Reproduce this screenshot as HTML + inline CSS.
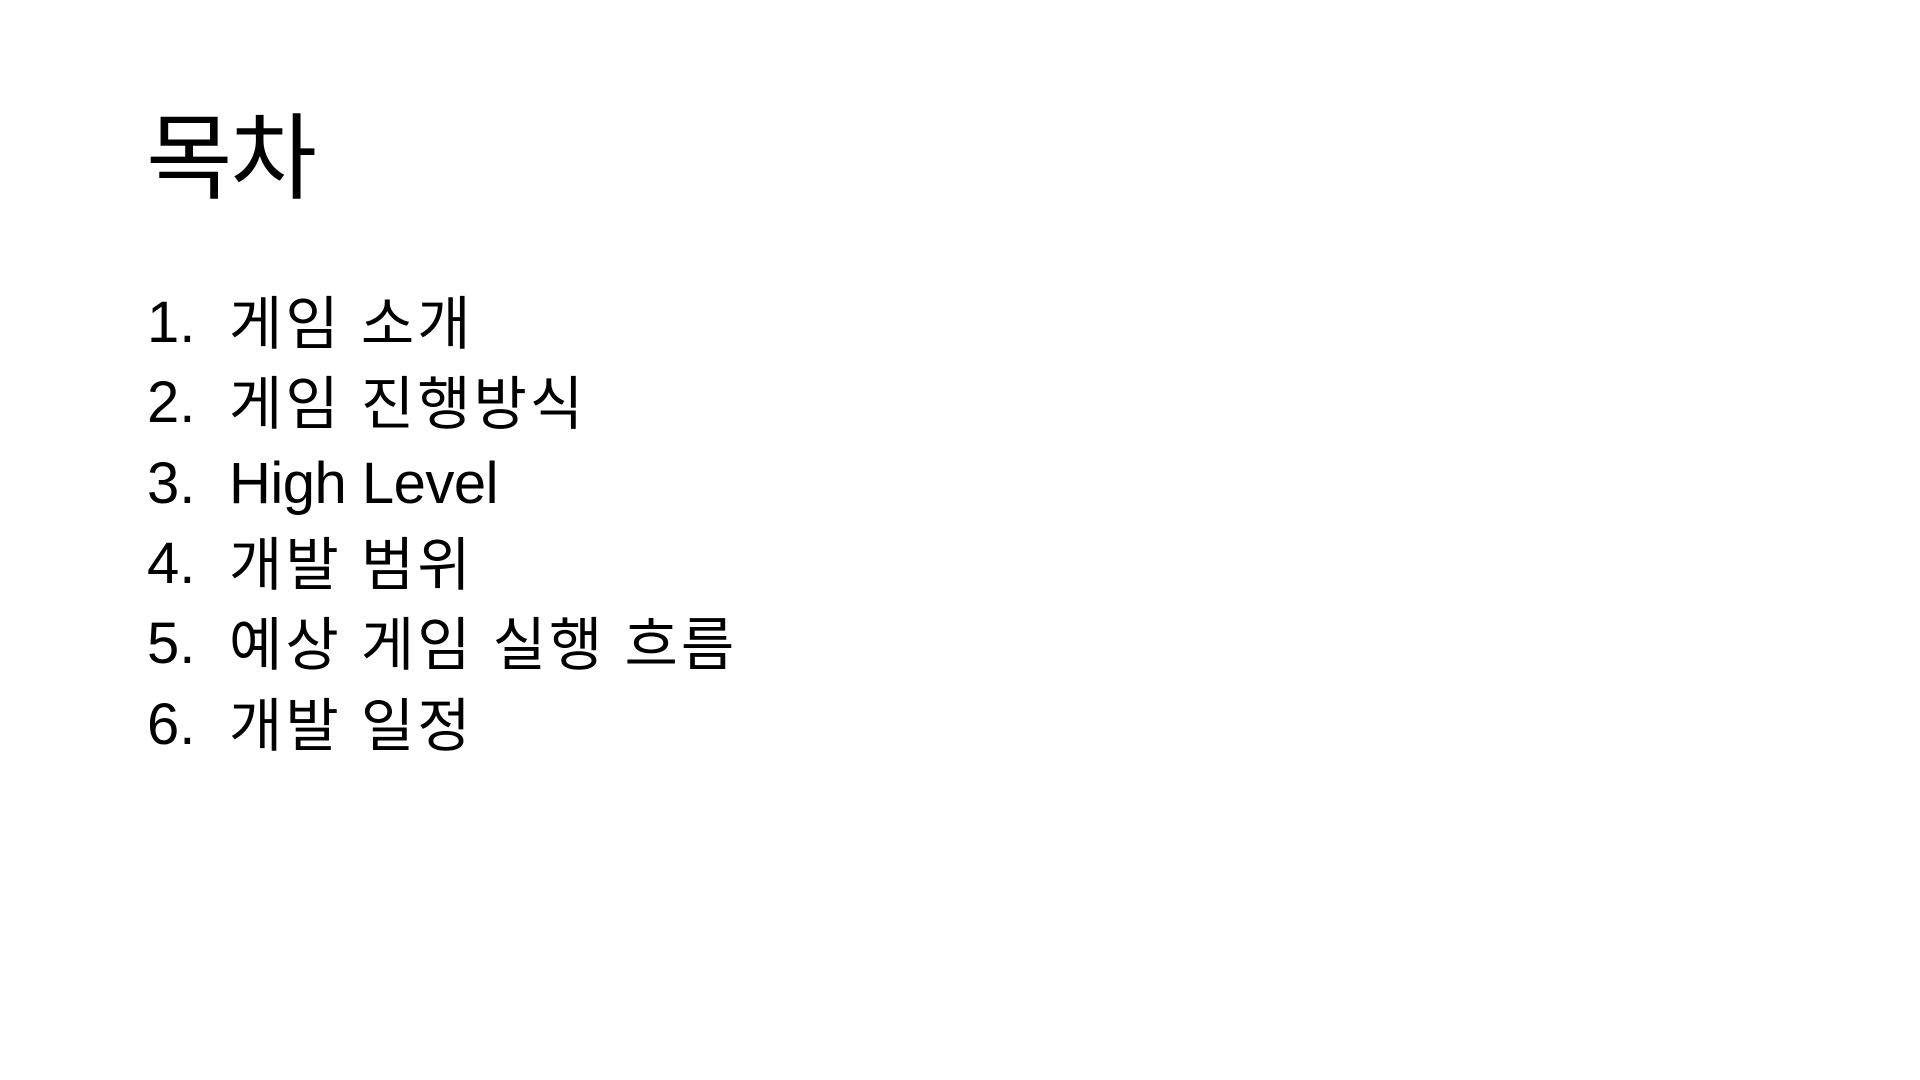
<!DOCTYPE html>
<html><head><meta charset="utf-8"><style>
html,body{margin:0;padding:0;background:#fff;width:1920px;height:1080px;overflow:hidden}
body{font-family:"Liberation Sans","Noto Sans CJK KR",sans-serif;color:#000;position:relative}
.t{position:absolute;left:146px;top:112px;font-size:94px;line-height:94px;white-space:nowrap;letter-spacing:-2px}
.l{position:absolute;font-size:58px;line-height:58px;white-space:nowrap}
.n{left:147px}.x{left:229px;letter-spacing:3px}
.e{letter-spacing:-0.5px}
</style></head><body>
<div class="t">목차</div>
<div class="l n" style="top:294px">1.</div><div class="l x" style="top:296px">게임 소개</div>
<div class="l n" style="top:374px">2.</div><div class="l x" style="top:376px">게임 진행방식</div>
<div class="l n" style="top:455px">3.</div><div class="l x e" style="top:455px">High Level</div>
<div class="l n" style="top:535px">4.</div><div class="l x" style="top:537px">개발 범위</div>
<div class="l n" style="top:615px">5.</div><div class="l x" style="top:617px">예상 게임 실행 흐름</div>
<div class="l n" style="top:696px">6.</div><div class="l x" style="top:698px">개발 일정</div>
</body></html>
